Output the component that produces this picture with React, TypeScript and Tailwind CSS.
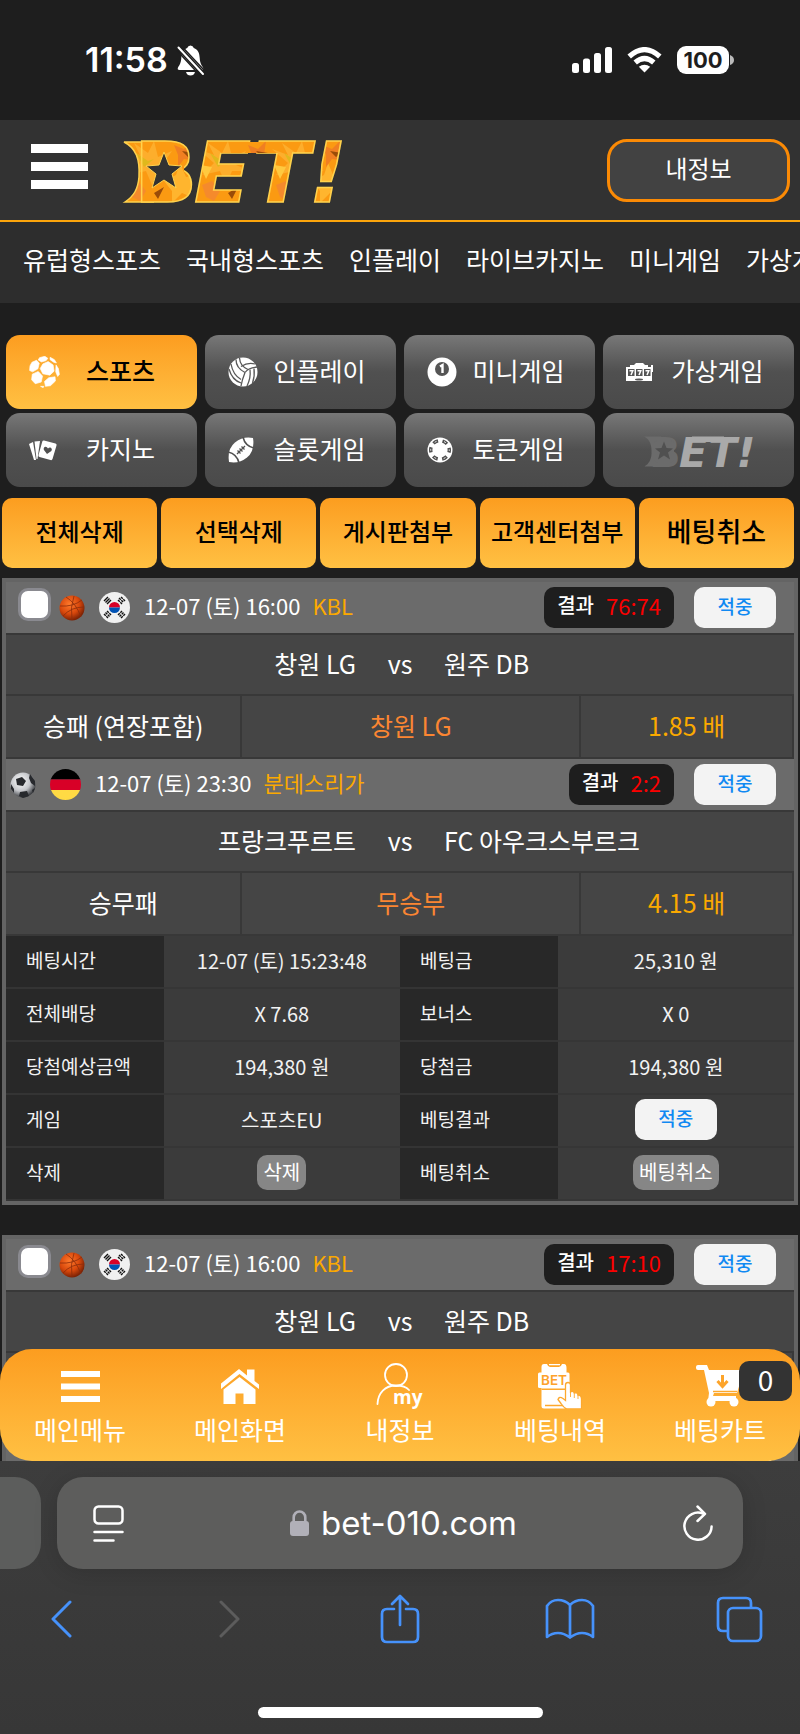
import { useId, type ReactNode } from "react";

const KOREAN = "[font-family:'Noto_Sans_CJK_KR',sans-serif]";
const LATIN = "[font-family:Inter,'Noto_Sans',sans-serif]";

/* ---------- logo ---------- */

function Logo({ muted = false, className }: { muted?: boolean; className: string }) {
  const id = useId().replace(/[^a-zA-Z0-9]/g, "");
  const fire = `url(#${id})`;
  const first = muted ? "#6b6b6b" : fire;
  const rest = muted ? "#a9a9a9" : fire;
  const edge = muted ? "none" : "#ffd24d";
  return (
    <svg viewBox="0 0 220 62" className={`overflow-visible ${className}`} role="img" aria-label="BET!">
      <defs>
        <pattern id={id} width="74" height="62" patternUnits="userSpaceOnUse">
          <rect width="74" height="62" fill="#fb9a12" />
          <path d="M0 8L16 14 10 2 24 12 30 0 34 16 48 10 38 24 52 30 34 30 28 44 22 30 4 34 16 22Z" fill="#fdae2c" />
          <path d="M40 40L52 34 56 22 62 36 74 34 66 46 72 58 58 52 48 62 48 50Z" fill="#ffb52e" />
          <path d="M50 4L60 8 68 0 66 14 74 20 60 18 54 26 54 14Z" fill="#f07f22" />
          <path d="M4 44L14 40 22 50 16 60 8 56Z" fill="#f58a2c" />
          <path d="M12 12L24 20 30 18 20 26Z" fill="#e0b81c" />
          <path d="M58 10L70 12 64 16ZM30 52L40 46 34 58Z" fill="#9a4c08" />
          <path d="M2 24L14 26 8 38ZM44 28L50 32 42 36Z" fill="#ffc93f" />
        </pattern>
      </defs>
      <path d="M0 1C12 1 24 1 34 1L30 61C20 61 10 61 1 61C10 55 14 48 15 36C16 18 12 7 0 1Z" fill={first} />
      <path d="M34 1H0C12 7 16 18 15 36C14 48 10 55 1 61H30" fill="none" stroke={edge} strokeWidth="1.500" />
      <g
        fontFamily="'DejaVu Sans', sans-serif"
        fontSize="83"
        fontWeight="700"
        strokeWidth="1.500"
      >
        <text x="10" y="61" fill={first} stroke={edge}>B</text>
        <g fontStyle="italic">
          <text x="70" y="61" fill={rest} stroke={edge}>E</text>
          <text x="129" y="61" fill={rest} stroke={edge}>T</text>
          <text x="185" y="61" fill={rest} stroke={edge}>!</text>
        </g>
      </g>
      <path d="M96 1H160V12H94Z" fill={rest} />
      <rect x="20" y="8" width="40" height="46" rx="10" fill={first} />
      <path
        d="M40 11L45 24 58 25 48 33 52 47 40 39 28 47 32 33 22 25 35 24Z"
        fill={muted ? "#505050" : "#323232"}
        stroke={edge}
      />
    </svg>
  );
}

/* ---------- category icons ---------- */

const SoccerIcon = () => (
  <svg viewBox="0 0 92 97" className="h-8 w-[31px]" fill="white" stroke="white" strokeWidth="2" strokeLinejoin="round">
    <path d="M41 24L57 17 72 27 75 46 62 58 41 54 33 38Z" />
    <path d="M8 19L22 13 30 22 26 39 10 48 1 44 2 30Z" />
    <path d="M9 55L27 47 40 61 36 79 18 84 7 72Z" />
    <path d="M46 77L59 66 78 63 79 76 64 90 49 92Z" />
    <path d="M81 27L88 38 91 55 86 62 80 48Z" />
    <path d="M31 5L47 1 56 7 51 14 37 18 27 12Z" />
    <path d="M63 4L76 11 82 21 74 19 63 11Z" />
    <path d="M34 92L44 92 42 96Z" />
  </svg>
);

const VolleyballIcon = () => (
  <svg viewBox="0 0 30 30" className="h-[30px] w-[30px]">
    <circle cx="15" cy="15" r="14.500" fill="white" />
    <g fill="none" stroke="#585858" strokeWidth="1.300">
      <path d="M8 2.500Q8 11 17 15.500" />
      <path d="M11.500 1Q12 9 20 12.500" />
      <path d="M3 7Q5 18 13 22.500" />
      <path d="M17 15.500Q14 23 13 29" />
      <path d="M17 15.500Q20 11 29 10" />
      <path d="M13 9.500Q20 5 27 7" />
      <path d="M22 12.500Q23 21 19 29" />
      <path d="M26 11.500Q27 19 24.500 26" />
      <path d="M1 12Q4 23 13 26" />
    </g>
  </svg>
);

const FootballIcon = () => (
  <svg viewBox="0 0 26 26" className="h-[26px] w-[26px]">
    <path d="M25 1Q27 14 19 20.500T1 25Q-1 12 7 5.500T25 1Z" fill="white" />
    <path d="M15 0Q17 9 26 11M0 15Q9 17 11 26" fill="none" stroke="#505050" strokeWidth="1.600" />
    <path d="M9 17L17 9M9.500 13.500L12.500 16.500M11.500 11.500L14.500 14.500M13.500 9.500L16.500 12.500" fill="none" stroke="#505050" strokeWidth="1.300" />
  </svg>
);

const BilliardIcon = () => (
  <svg viewBox="0 0 30 30" className="h-[30px] w-[30px]">
    <circle cx="15" cy="15" r="14.500" fill="white" />
    <circle cx="15" cy="12" r="7" fill="#555" />
    <path d="M13 9.500L15.500 8V16" fill="none" stroke="white" strokeWidth="2.400" />
  </svg>
);

const SlotIcon = () => (
  <svg viewBox="0 0 28 20" className="h-5 w-7">
    <path d="M4 3H8L10 1H17L19 3H22V5H25V3H27V10H26V17H26V19H0V5H4Z" fill="white" />
    <path d="M2 7H8.500V14H2ZM10 7H16.500V14H10ZM18 7H24.500V14H18Z" fill="#555" />
    <path d="M3.500 8.800H6.800L5 13M11.500 8.800H14.800L13 13M19.500 8.800H22.800L21 13" fill="none" stroke="white" strokeWidth="1.500" />
    <ellipse cx="13" cy="17.500" rx="4" ry="1" fill="#555" />
  </svg>
);

const CardsIcon = () => (
  <svg viewBox="0 0 28 21" className="h-[21px] w-7">
    <path d="M0 4L4 2 7 20 5 20Z" fill="white" />
    <path d="M5.500 1.500L11 1 8.500 19 7.500 19Z" fill="white" />
    <path d="M15 0.500L26.500 3.500Q28 4 27.500 5.500L23.500 19Q23 20.500 21.500 20L10.500 17Q9 16.500 9.500 15L13.300 1.500Q13.800 0.300 15 0.500Z" fill="white" />
    <path d="M18 14L14.800 9.800Q14.300 7.200 16.500 6.800 18 6.700 19 8.400 20.500 7 22 7.800 23.600 9 22.400 11Z" fill="#505050" />
  </svg>
);

const ChipIcon = () => (
  <svg viewBox="0 0 26 26" className="h-[26px] w-[26px]">
    <circle cx="13" cy="13" r="12.500" fill="white" />
    <circle cx="13" cy="13" r="9.300" fill="none" stroke="#505050" strokeWidth="3.400" strokeDasharray="5.200 4.540" strokeDashoffset="2.600" />
    <circle cx="13" cy="13" r="9.300" fill="none" stroke="white" strokeWidth="1" strokeDasharray="2 7.740" strokeDashoffset="1" />
  </svg>
);

type Category = { label: string; icon: ReactNode; active?: boolean };

const categories: Category[] = [
  { label: "스포츠", icon: <SoccerIcon />, active: true },
  { label: "인플레이", icon: <VolleyballIcon /> },
  { label: "미니게임", icon: <BilliardIcon /> },
  { label: "가상게임", icon: <SlotIcon /> },
  { label: "카지노", icon: <CardsIcon /> },
  { label: "슬롯게임", icon: <FootballIcon /> },
  { label: "토큰게임", icon: <ChipIcon /> },
];

/* ---------- ball and flag badges ---------- */

const Basketball = () => (
  <svg viewBox="0 0 26 26" className="h-[26px] w-[26px] shrink-0">
    <defs>
      <radialGradient id="basket" cx="0.4" cy="0.35" r="0.65">
        <stop offset="0" stopColor="#ff7a2c" />
        <stop offset="0.600" stopColor="#d8480c" />
        <stop offset="1" stopColor="#7c2204" />
      </radialGradient>
    </defs>
    <circle cx="13" cy="13" r="12.500" fill="url(#basket)" />
    <path d="M1 11Q14 12 23 5M7 2Q17 8 22 22M4 21Q12 12 25 12M15 1Q11 12 13 25" fill="none" stroke="#8a2c0a" strokeWidth="0.800" />
  </svg>
);

const SoccerBall = () => (
  <svg viewBox="0 0 26 26" className="h-[26px] w-[26px] shrink-0">
    <defs>
      <radialGradient id="soccer" cx="0.4" cy="0.35" r="0.65">
        <stop offset="0" stopColor="#ffffff" />
        <stop offset="0.600" stopColor="#c4c6ca" />
        <stop offset="1" stopColor="#3c3e42" />
      </radialGradient>
    </defs>
    <circle cx="13" cy="13" r="12.500" fill="url(#soccer)" />
    <path d="M6 7L12 5 16 9 13 14 7 13ZM20 2L25 9 25 14 21 11 19 6ZM1 12L4 17 4 21 1 17ZM10 20L17 19 19 24 13 26 9 24ZM22 18L25 16 23 21Z" fill="#27292d" />
  </svg>
);

const KoreaFlag = () => (
  <svg viewBox="0 0 31 31" className="h-[31px] w-[31px] shrink-0">
    <circle cx="15.500" cy="15.500" r="15.500" fill="#f0f0f0" />
    <path d="M10 15.500A5.500 5.500 0 0 1 21 15.500Z" fill="#d80027" />
    <path d="M10 15.500A5.500 5.500 0 0 0 21 15.500Z" fill="#0052b4" />
    <g stroke="#111" strokeWidth="1.400">
      <path d="M5 9L9 5M6.500 10.500L10.500 6.500M8 12L12 8" />
      <path d="M20 6L24.500 10.500M22 5L26 9M19 8L23 12" strokeDasharray="2.500 0.800" />
      <path d="M5 22L9 26M6.500 20.500L10.500 24.500M8 19L12 23" strokeDasharray="2.500 0.800" />
      <path d="M19 23L23 19M20.500 24.500L24.500 20.500M22 26L26 22" strokeDasharray="2.500 0.800" />
    </g>
  </svg>
);

const GermanyFlag = () => (
  <svg viewBox="0 0 31 31" className="h-[31px] w-[31px] shrink-0">
    <clipPath id="de"><circle cx="15.500" cy="15.500" r="15.500" /></clipPath>
    <g clipPath="url(#de)">
      <path d="M0 0H31V10.500H0Z" fill="#000" />
      <path d="M0 10.500H31V21H0Z" fill="#d80027" />
      <path d="M0 21H31V31H0Z" fill="#ffda44" />
    </g>
  </svg>
);

/* ---------- bet slips ---------- */

type Match = {
  sport: "basketball" | "soccer";
  time: string;
  league: string;
  score: string;
  home: string;
  away: string;
  market: string;
  pick: string;
  odds: string;
};

const Hit = ({ className }: { className?: string }) => (
  <span className={`inline-flex h-[41px] w-[82px] items-center justify-center rounded-[10px] bg-[#f3f3f3] pb-1 text-[19px] leading-6 font-medium text-[#1089f2] ${className ?? ""}`}>
    적중
  </span>
);

function MatchRows({ match, selectable }: { match: Match; selectable: boolean }) {
  return (
    <>
      <div className={`flex h-[53px] items-center border-b-2 border-[#383838] bg-[#6b6b6b] pr-[18px] ${selectable ? "pl-3" : "pl-1"}`}>
        {selectable && (
          <input
            type="checkbox"
            aria-label={`${match.home} vs ${match.away} 선택`}
            className="mr-2 mb-1.5 h-[33px] w-[33px] shrink-0 appearance-none rounded-[10px] border-[3px] border-[#8a8a90] bg-white checked:bg-[#fba01f]"
          />
        )}
        {match.sport === "basketball" ? <Basketball /> : <SoccerBall />}
        <span className="mx-3.5 flex">{match.sport === "basketball" ? <KoreaFlag /> : <GermanyFlag />}</span>
        <span className="pb-1.5 text-[22px] leading-7 text-white">{match.time}</span>
        <span className="ml-3 pb-1.5 text-[22px] leading-7 text-[#fba900]">{match.league}</span>
        <span className="mr-5 ml-auto flex h-[41px] items-center gap-3 rounded-[10px] bg-[#1e1e1e] px-[13px] pb-1.5 leading-7">
          <span className="text-[20px] font-medium text-white">결과</span>
          <span className="text-[22px] text-[#fb0000]">{match.score}</span>
        </span>
        <Hit />
      </div>
      <div className="grid h-[61px] grid-cols-[1fr_88px_1fr] items-center border-b-2 border-[#383838] bg-[#454545] pb-1 text-[25px] leading-8 text-white">
        <span className="text-right">{match.home}</span>
        <span className="text-center">vs</span>
        <span>{match.away}</span>
      </div>
      <div className="grid h-[63px] grid-cols-[30fr_43fr_27fr] border-b-2 border-[#383838] bg-[#454545] text-[25px] leading-8 [&>span]:flex [&>span]:items-center [&>span]:justify-center [&>span]:pb-1">
        <span className="border-r-2 border-[#383838] text-white">{match.market}</span>
        <span className="border-r-2 border-[#383838] text-[#fb8632]">{match.pick}</span>
        <span className="border-r-2 border-[#383838] text-[#fba900]">{match.odds} 배</span>
      </div>
    </>
  );
}

const Pill = ({ children }: { children: ReactNode }) => (
  <button className="inline-flex h-[35px] items-center rounded-[10px] bg-[#868686] px-1.5 pb-0.5 align-middle text-[20px] leading-6 text-white">{children}</button>
);

const details: [string, ReactNode, string, ReactNode][] = [
  ["베팅시간", "12-07 (토) 15:23:48", "베팅금", "25,310 원"],
  ["전체배당", "X 7.68", "보너스", "X 0"],
  ["당첨예상금액", "194,380 원", "당첨금", "194,380 원"],
  ["게임", "스포츠EU", "베팅결과", <Hit key="hit" className="align-middle" />],
  ["삭제", <Pill key="del">삭제</Pill>, "베팅취소", <Pill key="cancel">베팅취소</Pill>],
];

const labelCell = "h-[53px] w-1/5 border-b-2 border-[#343434] bg-[#282828] p-0 pb-1 pl-5 text-left text-[19px] font-normal";
const valueCell = "h-[53px] w-[30%] border-b-2 border-[#363636] bg-[#3b3b3b] p-0 pb-0.5 text-center text-[20px]";

function BetSlip({ matches }: { matches: Match[] }) {
  return (
    <article className="border-4 border-[#646464]">
      {matches.map((m, i) => (
        <MatchRows key={m.home} match={m} selectable={i === 0} />
      ))}
      <table className="w-full table-fixed border-separate border-spacing-0 leading-7 text-[#f2f2f2]">
        <tbody>
          {details.map(([a, av, b, bv]) => (
            <tr key={a}>
              <th scope="row" className={labelCell}>{a}</th>
              <td className={valueCell}>{av}</td>
              <th scope="row" className={labelCell}>{b}</th>
              <td className={valueCell}>{bv}</td>
            </tr>
          ))}
        </tbody>
      </table>
    </article>
  );
}

const kbl: Match = {
  sport: "basketball",
  time: "12-07 (토) 16:00",
  league: "KBL",
  score: "76:74",
  home: "창원 LG",
  away: "원주 DB",
  market: "승패 (연장포함)",
  pick: "창원 LG",
  odds: "1.85",
};

const bundesliga: Match = {
  sport: "soccer",
  time: "12-07 (토) 23:30",
  league: "분데스리가",
  score: "2:2",
  home: "프랑크푸르트",
  away: "FC 아우크스부르크",
  market: "승무패",
  pick: "무승부",
  odds: "4.15",
};

/* ---------- bottom navigation ---------- */

const MenuLines = () => (
  <svg viewBox="0 0 39 31" className="h-[31px] w-[39px]" fill="white">
    <path d="M0 0H39V6H0ZM0 12.500H39V18.500H0ZM0 25H39V31H0Z" />
  </svg>
);

const HomeIcon = () => (
  <svg viewBox="0 0 38 35" className="h-[35px] w-[38px]" fill="white">
    <path d="M0 14.500L18 0 26 6.500V0.500H33.500V12L38 15.500V20L18.500 5 0 20Z" />
    <path d="M18.500 8L34.500 20.500V35H22.500V24.500H14.500V35H2.500V20.500Z" />
  </svg>
);

const MyIcon = () => (
  <svg viewBox="0 0 48 46" className="h-[46px] w-12 overflow-visible">
    <g fill="none" stroke="white" strokeWidth="1.800">
      <circle cx="20" cy="12" r="11" />
      <path d="M1.500 41C2 30 9 22.500 20 22.500Q29 22.500 33 27" strokeLinecap="round" />
    </g>
    <text x="17" y="41" fontFamily="'Open Sans', sans-serif" fontWeight="700" fontSize="19" fill="white">my</text>
  </svg>
);

const BetIcon = () => (
  <svg viewBox="0 0 44 45" className="h-[45px] w-11">
    <path d="M6 0H9Q10 3 12 3H21Q23 3 24 0H26Q28.500 0 28.500 4V42Q28.500 44.500 26 44.500H6Q3.500 44.500 3.500 42V3Q3.500 0 6 0Z" fill="white" />
    <path d="M11 0.500H22" stroke="white" strokeWidth="1.500" />
    <path d="M3.500 25.200H29M7 41.500H26" stroke="#fda82d" strokeWidth="1.500" />
    <rect x="0" y="8.500" width="31.500" height="15.500" rx="1.500" fill="white" />
    <text x="3" y="21" fontFamily="Inter, sans-serif" fontWeight="600" fontSize="13.500" fill="#fda22a">BET</text>
    <path d="M30 18.500Q32.500 18.500 32.500 21V28Q35.500 26.500 36.300 29 39.300 28 40 31 43.500 31 43.500 35V45H29Q26 44 23 39.500L20 35.500Q21 32 25 34.500L27.500 36.500V21Q27.500 18.500 30 18.500Z" fill="white" stroke="#fda82d" strokeWidth="1.300" />
    <path d="M32.500 27V33M36.300 29V34M40 31V35" stroke="#fda82d" strokeWidth="0.900" />
  </svg>
);

const CartIcon = () => (
  <svg viewBox="0 0 48 42" className="h-[42px] w-12">
    <path d="M0 2Q0 0 2 0H11L13 5H48L41 28H18L17 31H40V36H12L13 28 8 5H2Q0 5 0 3Z" fill="white" />
    <circle cx="15" cy="37" r="4.500" fill="white" />
    <circle cx="38" cy="37" r="4.500" fill="white" />
    <path d="M26.500 10V20M21.500 16L26.500 21.500 31.500 16" fill="none" stroke="#fda42a" strokeWidth="3" />
    <path d="M17 26.500H41" stroke="#fda82d" strokeWidth="1.500" />
  </svg>
);

const tabs = [
  { label: "메인메뉴", icon: <MenuLines /> },
  { label: "메인화면", icon: <HomeIcon /> },
  { label: "내정보", icon: <MyIcon /> },
  { label: "베팅내역", icon: <BetIcon /> },
  { label: "베팅카트", icon: <CartIcon />, count: 0 },
];

const orange = "bg-linear-to-b from-[#fc9d1f] to-[#ffc042]";

/* ---------- page ---------- */

export default function App() {
  return (
    <div className={`flex h-screen flex-col overflow-hidden bg-[#1e1e1e] ${KOREAN}`}>
      <div className={`flex h-[120px] shrink-0 items-center justify-between pr-[66px] pl-[85px] text-white ${LATIN}`}>
        <div className="flex items-center gap-2">
          <span className="text-[34px] leading-10 font-semibold">11:58</span>
          <svg viewBox="0 0 29 31" className="h-[31px] w-[29px]">
            <path d="M14.500 0.500Q17 0.500 17.800 3C22 4.500 23.500 8 23.700 13C24 18 25.500 20 27 22.500Q28 25 25.500 25H3.500Q1 25 2 22.500C3.500 20 5 18 5.300 13C5.500 8 7 4.500 11.200 3Q12 0.500 14.500 0.500Z" fill="white" />
            <path d="M10 27H19Q18 30.500 14.500 30.500T10 27Z" fill="white" />
            <path d="M0 4.500L25 31.500M5 0.500L29 26" stroke="#1e1e1e" strokeWidth="1.500" />
            <path d="M2.500 2.500L27 29" stroke="#1e1e1e" strokeWidth="5" />
            <path d="M2.500 2.500L27 29" stroke="white" strokeWidth="2" strokeLinecap="round" />
          </svg>
        </div>
        <div className="flex items-center gap-[15px]">
          <svg viewBox="0 0 40 26" className="h-[26px] w-10" fill="white">
            <rect x="0" y="16" width="7" height="10" rx="2.500" />
            <rect x="11" y="11.500" width="7" height="14.500" rx="2.500" />
            <rect x="22" y="6" width="7" height="20" rx="2.500" />
            <rect x="33" y="0" width="7" height="26" rx="2.500" />
          </svg>
          <svg viewBox="0 0 35 26" className="h-[26px] w-[35px]" fill="none" stroke="white" strokeWidth="5.200">
            <path d="M2.200 9.500Q17.500 -4.200 32.800 9.500" />
            <path d="M8.200 15.500Q17.500 7.500 26.800 15.500" />
            <path d="M17.500 25.500L11.800 19.800Q17.500 15.500 23.200 19.800Z" fill="white" stroke="none" />
          </svg>
          <span className="flex items-center gap-px">
            <span className="flex h-7 w-[52px] items-center justify-center rounded-[9px] bg-white text-[22px] leading-7 font-bold text-[#1e1e1e]">100</span>
            <svg viewBox="0 0 4 10" className="h-2.5 w-1" fill="#bbb"><path d="M0 0Q4 1.500 4 5T0 10Z" /></svg>
          </span>
        </div>
      </div>

      <header className="flex h-[102px] shrink-0 items-center border-b-2 border-[#fca50c] bg-[#323232] pr-2.5 pl-[31px]">
        <button aria-label="메뉴" className="pb-2">
          <svg viewBox="0 0 57 45" className="h-[45px] w-[57px]" fill="white">
            <path d="M0 0H57V9H0ZM0 18H57V27H0ZM0 36H57V45H0Z" />
          </svg>
        </button>
        <a href="#home" className="ml-9 pt-1"><Logo className="h-[62px] w-[220px]" /></a>
        <button className="ml-auto h-[63px] w-[183px] rounded-[20px] border-[3px] border-[#fb8a05] bg-[#424242] pb-1 text-[24px] leading-8 text-white">
          내정보
        </button>
      </header>

      <nav className="flex h-[81px] shrink-0 items-center gap-[25px] overflow-hidden bg-[#2d2d2d] px-[23px] pb-2 text-[25px] leading-9 whitespace-nowrap text-white">
        {["유럽형스포츠", "국내형스포츠", "인플레이", "라이브카지노", "미니게임", "가상게임"].map((t) => (
          <a key={t} href="#menu">{t}</a>
        ))}
      </nav>

      <main className="relative min-h-0 flex-1 overflow-hidden">
        <section className="grid grid-cols-4 gap-x-2 gap-y-1 px-1.5 pt-8">
          {categories.map((c) => (
            <button
              key={c.label}
              className={`flex h-[74px] items-center rounded-[14px] pb-1 pl-[23px] text-[25px] leading-8 ${
                c.active ? `${orange} font-medium text-black` : "bg-linear-to-b from-[#787878] via-[#505050] via-50% to-[#4a4a4a] text-white"
              }`}
            >
              <span className="flex w-8 shrink-0 items-center pt-1">{c.icon}</span>
              <span className="flex-1 pr-[17px] text-center">{c.label}</span>
            </button>
          ))}
          <button className="flex h-[74px] items-center justify-center rounded-[14px] bg-linear-to-b from-[#787878] via-[#505050] via-50% to-[#4a4a4a] pt-0.5">
            <Logo muted className="h-[31px] w-[110px]" />
          </button>
        </section>

        <section className="mt-[11px] mr-1.5 ml-0.5 grid grid-cols-5 gap-1">
          {["전체삭제", "선택삭제", "게시판첨부", "고객센터첨부", "베팅취소"].map((t) => (
            <button
              key={t}
              className={`h-[70px] rounded-[10px] pb-1 leading-8 font-medium whitespace-nowrap text-black last:text-[27px] not-last:text-[24px] ${orange}`}
            >
              {t}
            </button>
          ))}
        </section>

        <section className="mx-0.5 mt-2.5 flex flex-col gap-[30px]">
          <BetSlip matches={[kbl, bundesliga]} />
          <BetSlip matches={[{ ...kbl, score: "17:10" }, bundesliga]} />
        </section>

        <nav className={`absolute inset-x-0 bottom-0 grid h-28 grid-cols-5 rounded-[32px] ${orange}`}>
          {tabs.map((t) => (
            <a key={t.label} href="#tab" className="relative flex flex-col items-center pt-3.5 text-[25px] leading-8 text-white">
              <span className="flex h-[46px] items-center">{t.icon}</span>
              <span className="mt-1">{t.label}</span>
              {t.count !== undefined && (
                <span className="absolute top-3 right-2 flex h-10 w-[53px] items-center justify-center rounded-[10px] bg-[#333] pb-1 text-[28px] leading-8">
                  {t.count}
                </span>
              )}
            </a>
          ))}
        </nav>
      </main>

      <footer className={`shrink-0 overflow-hidden bg-linear-to-b from-[#3d3d3d] to-[#373737] pt-4 pb-4 ${LATIN}`}>
        <div className="flex h-[92px] items-stretch gap-4 pr-[57px]">
          <div className="w-[41px] rounded-r-[26px] bg-[#5c5d5c]" />
          <div className="flex flex-1 items-center justify-between rounded-[26px] bg-[#5d5d5c] pr-[30px] pl-9 shadow-[0_4px_24px_rgba(0,0,0,0.15)]">
            <button aria-label="페이지 메뉴">
              <svg viewBox="0 0 31 37" className="h-[37px] w-[31px]" fill="none" stroke="white" strokeWidth="2.500" strokeLinecap="round">
                <rect x="1.500" y="1.500" width="28" height="17" rx="4" />
                <path d="M1.500 27H29.500M1.500 35.500H20.500" />
              </svg>
            </button>
            <span className="flex items-center gap-3">
              <svg viewBox="0 0 19 26" className="h-[26px] w-[19px]">
                <rect x="0" y="11" width="19" height="15" rx="3" fill="#b1b0b8" />
                <path d="M3.700 12V7.500A5.800 6 0 0 1 15.300 7.500V12" fill="none" stroke="#b1b0b8" strokeWidth="2.600" />
              </svg>
              <span className="text-[33px] leading-10 text-white">bet-010.com</span>
            </span>
            <button aria-label="새로고침">
              <svg viewBox="0 0 30 37" className="h-[37px] w-[30px]" fill="none" stroke="white" strokeWidth="2.500" strokeLinecap="round" strokeLinejoin="round">
                <path d="M20 8.500A13.600 13.600 0 1 0 28.600 21.500" />
                <path d="M14.500 1.500L22 8.800 14.500 16" />
              </svg>
            </button>
          </div>
        </div>
        <div className="-mx-6 mt-6 grid h-[52px] grid-cols-5 items-center justify-items-center text-[#4692fb]">
          <button aria-label="뒤로">
            <svg viewBox="0 0 22 38" className="h-[38px] w-[22px]" fill="none" stroke="currentColor" strokeWidth="3" strokeLinecap="round" strokeLinejoin="round"><path d="M20 2L3 19 20 36" /></svg>
          </button>
          <button aria-label="앞으로" className="text-[#5c5c5c]" disabled>
            <svg viewBox="0 0 22 38" className="h-[38px] w-[22px]" fill="none" stroke="currentColor" strokeWidth="3" strokeLinecap="round" strokeLinejoin="round"><path d="M2 2L19 19 2 36" /></svg>
          </button>
          <button aria-label="공유">
            <svg viewBox="0 0 40 50" className="h-[50px] w-10" fill="none" stroke="currentColor" strokeWidth="2.700" strokeLinecap="round" strokeLinejoin="round">
              <path d="M14 15H7Q2 15 2 20V43Q2 48 7 48H33Q38 48 38 43V20Q38 15 33 15H26M20 31V2M12 10L20 2 28 10" />
            </svg>
          </button>
          <button aria-label="책갈피">
            <svg viewBox="0 0 50 42" className="h-[42px] w-[50px]" fill="none" stroke="currentColor" strokeWidth="2.700" strokeLinecap="round" strokeLinejoin="round">
              <path d="M25 7Q20 2 13 2T2 8V39Q7 35 13 35T25 39.500V7Q30 2 37 2T48 8V39Q43 35 37 35T25 39.500" />
            </svg>
          </button>
          <button aria-label="탭">
            <svg viewBox="0 0 47 47" className="h-[47px] w-[47px]" fill="none" stroke="currentColor" strokeWidth="2.700" strokeLinejoin="round">
              <path d="M12 35H7Q2 35 2 30V7Q2 2 7 2H30Q35 2 35 7V12" />
              <rect x="12" y="12" width="33" height="33" rx="5" />
            </svg>
          </button>
        </div>
        <div className="mx-auto mt-[62px] h-[11px] w-[285px] rounded-full bg-white" />
      </footer>
    </div>
  );
}
